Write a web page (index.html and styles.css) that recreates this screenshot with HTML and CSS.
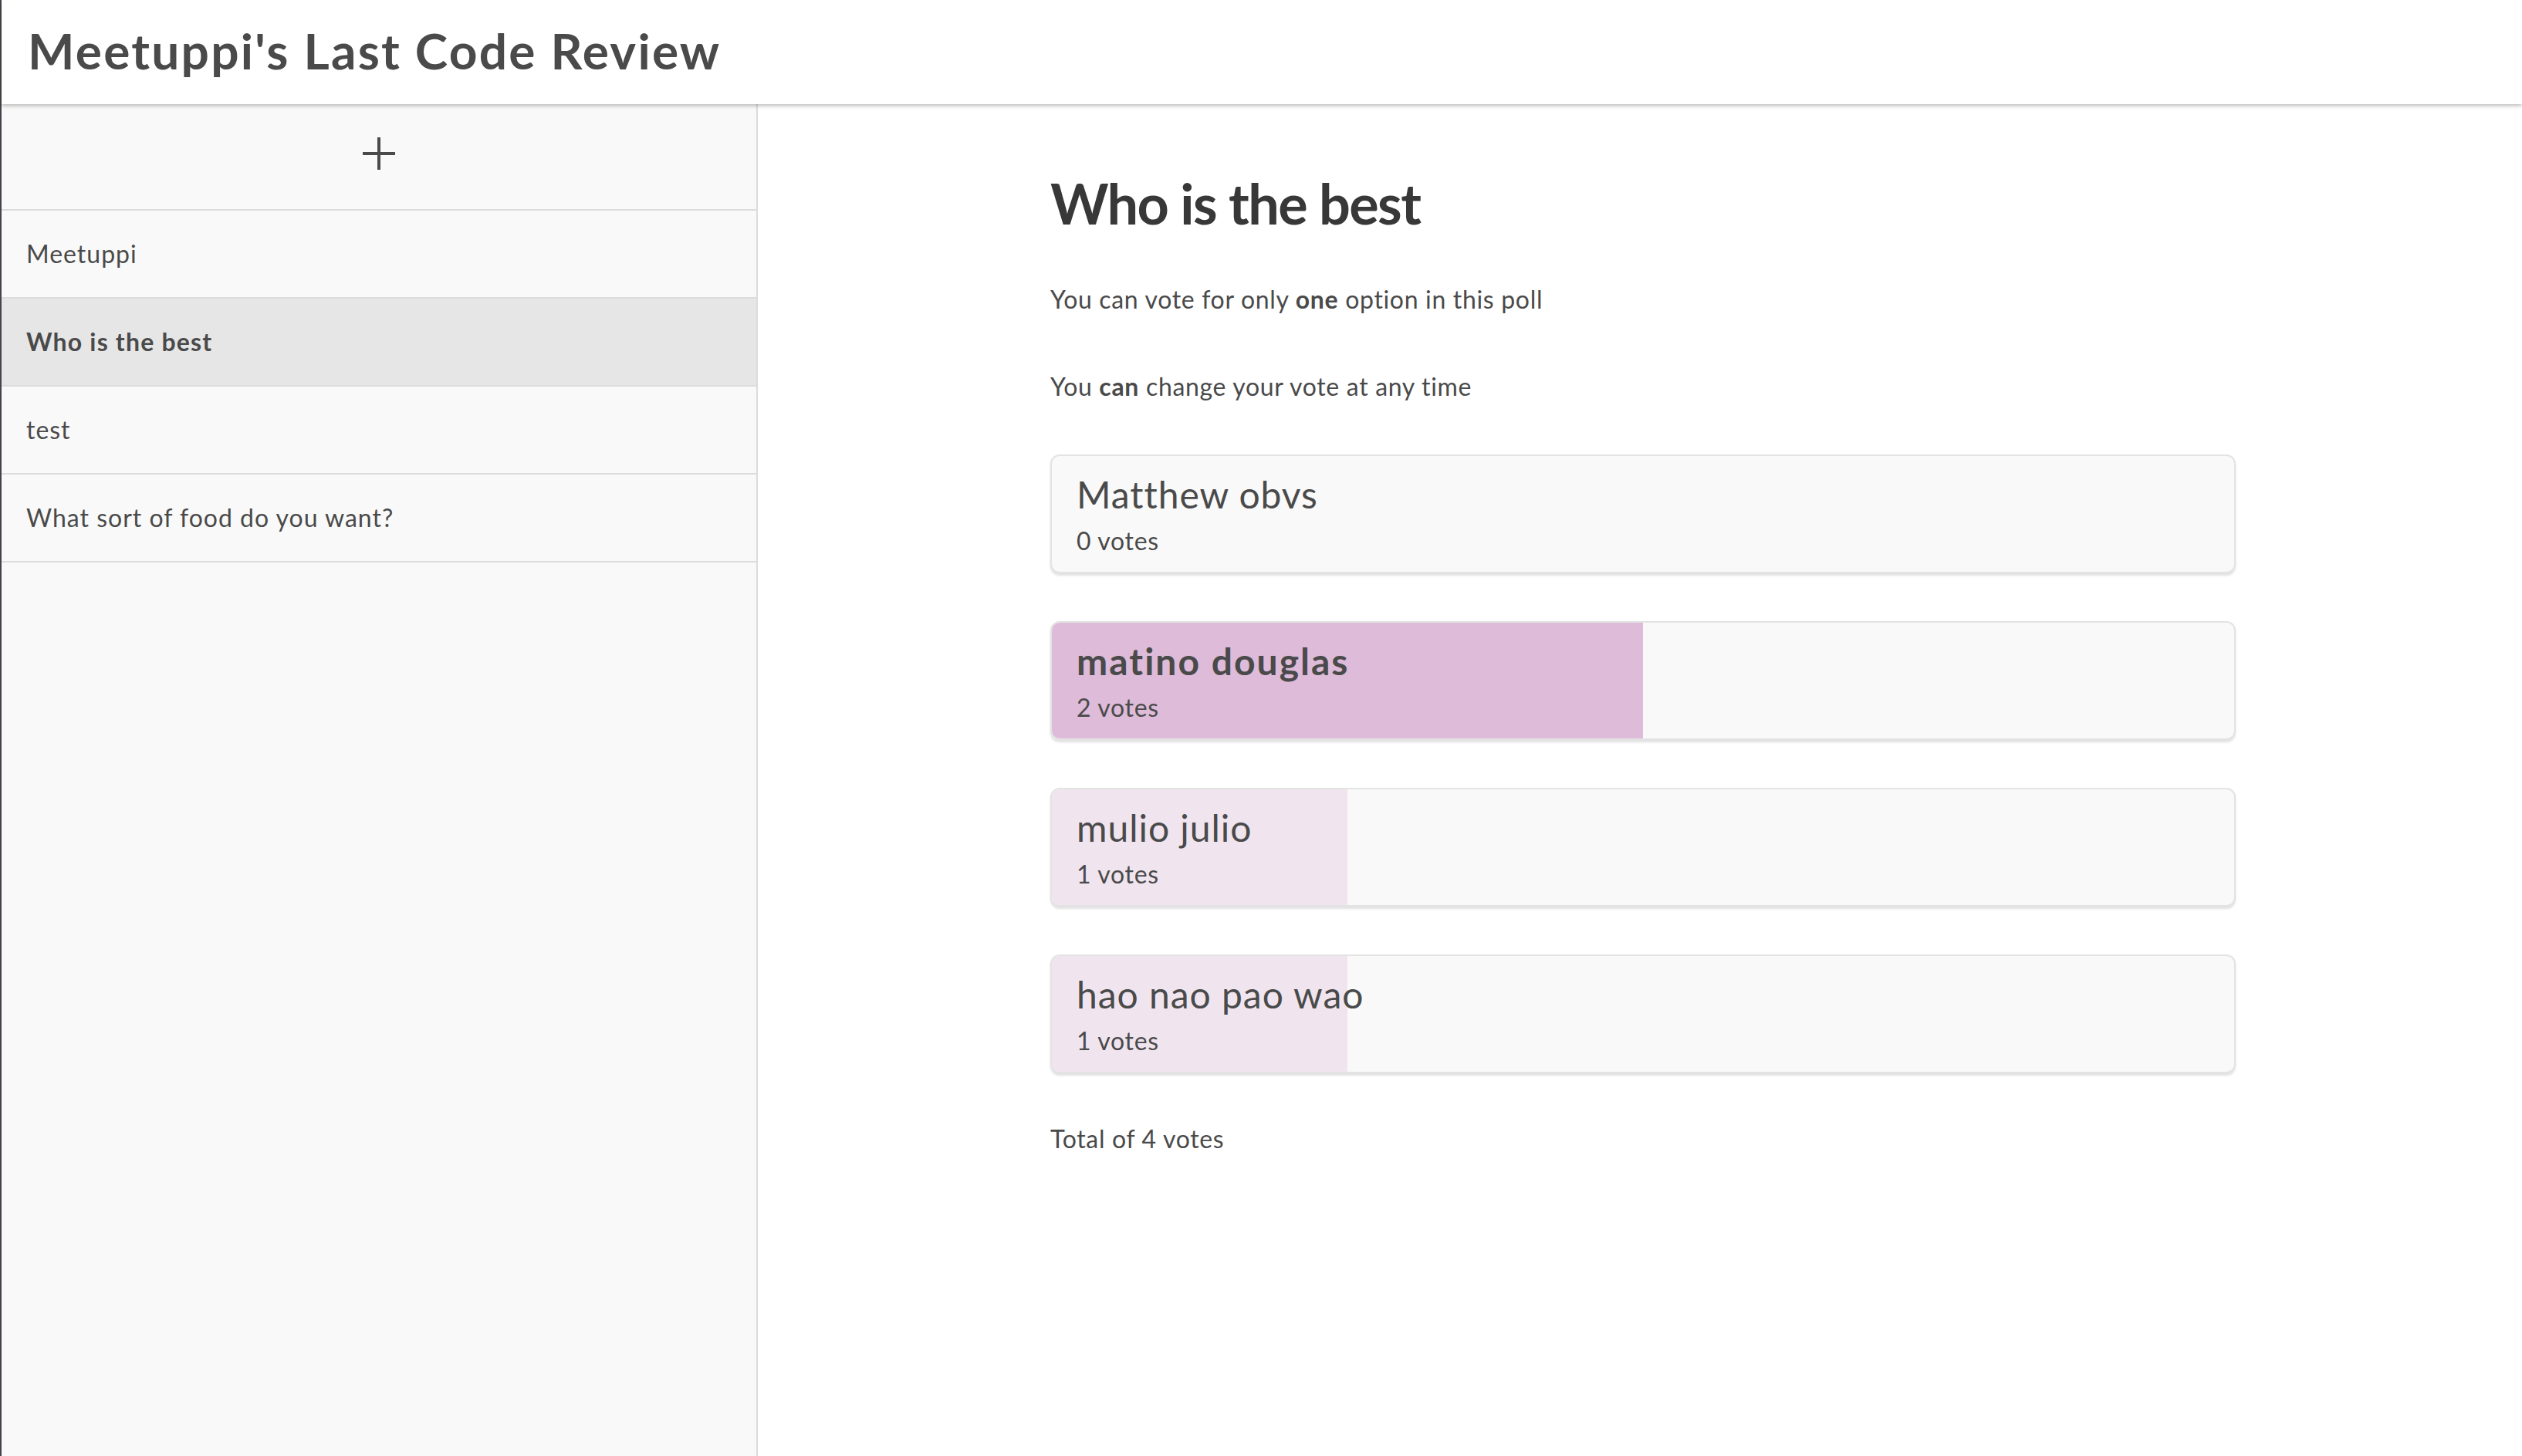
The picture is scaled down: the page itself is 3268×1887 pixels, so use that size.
FILE: index.html
```html
<!DOCTYPE html>
<html lang="en">
<head>
<meta charset="utf-8">
<title>Meetuppi's Last Code Review</title>
<link rel="stylesheet" href="styles.css">
</head>
<body>
<div class="app">
  <header class="topbar">
    <h1 class="app-title">Meetuppi's Last Code Review</h1>
  </header>
  <div class="layout">
    <aside class="sidebar">
      <button class="add-btn" type="button" aria-label="New poll">
        <svg width="46" height="46" viewBox="0 0 46 46"><path d="M23 2V44M2 23H44" stroke="#4a4a4a" stroke-width="4" fill="none"/></svg>
      </button>
      <ul class="poll-list">
        <li class="poll-item">Meetuppi</li>
        <li class="poll-item active">Who is the best</li>
        <li class="poll-item">test</li>
        <li class="poll-item">What sort of food do you want?</li>
      </ul>
    </aside>
    <main class="main">
      <section class="poll">
        <h2 class="poll-title">Who is the best</h2>
        <p class="rule rule-one">You can vote for only <b>one</b> option in this poll</p>
        <p class="rule rule-two">You <b>can</b> change your vote at any time</p>
        <div class="options">
          <div class="option">
            <div class="fill" style="width:0%"></div>
            <div class="option-body">
              <div class="option-name">Matthew obvs</div>
              <div class="option-votes">0 votes</div>
            </div>
          </div>
          <div class="option voted">
            <div class="fill fill-strong" style="width:50%"></div>
            <div class="option-body">
              <div class="option-name">matino douglas</div>
              <div class="option-votes">2 votes</div>
            </div>
          </div>
          <div class="option">
            <div class="fill" style="width:25%"></div>
            <div class="option-body">
              <div class="option-name">mulio julio</div>
              <div class="option-votes">1 votes</div>
            </div>
          </div>
          <div class="option">
            <div class="fill" style="width:25%"></div>
            <div class="option-body">
              <div class="option-name">hao nao pao wao</div>
              <div class="option-votes">1 votes</div>
            </div>
          </div>
        </div>
        <p class="total">Total of 4 votes</p>
      </section>
    </main>
  </div>
</div>
</body>
</html>
```
FILE: styles.css
```css
* { box-sizing: border-box; }
html, body { margin: 0; padding: 0; height: 100%; }
body {
  font-family: Lato, "Open Sans", "Noto Sans", sans-serif;
  color: #4a4a4a;
  background: #ffffff;
  letter-spacing: 0.042em;
}
.app {
  display: flex;
  flex-direction: column;
  height: 100vh;
  border-left: 2px solid #46444c;
}
.topbar {
  height: 135px;
  flex: 0 0 135px;
  background: #ffffff;
  padding: 27px 0 0 34px;
  box-shadow: 0 2px 5px rgba(0,0,0,0.28);
  position: relative;
  z-index: 2;
}
.app-title {
  margin: 0;
  font-size: 64px;
  line-height: 77px;
  font-weight: 700;
  letter-spacing: 0.035em;
  color: #4a4a4a;
}
.layout {
  flex: 1;
  display: flex;
  min-height: 0;
}
.sidebar {
  width: 980px;
  flex: 0 0 980px;
  background: #f9f9f9;
  border-right: 2px solid #dcdcdc;
  display: flex;
  flex-direction: column;
}
.add-btn {
  height: 138px;
  border: 0;
  border-bottom: 2px solid #dcdcdc;
  background: transparent;
  display: flex;
  align-items: center;
  justify-content: center;
  padding: 0 0 8px 0;
  cursor: pointer;
}
.poll-list {
  list-style: none;
  margin: 0;
  padding: 0;
}
.poll-item {
  height: 114px;
  line-height: 112px;
  padding-left: 32px;
  border-bottom: 2px solid #dcdcdc;
  font-size: 32px;
  letter-spacing: 0.031em;
  color: #4a4a4a;
}
.poll-item.active {
  background: #e6e6e6;
  font-weight: 700;
  letter-spacing: 0.037em;
}
.main {
  flex: 1;
  display: flex;
  justify-content: center;
  padding: 85px 0 0 8px;
}
.poll {
  width: 1536px;
}
.poll-title {
  margin: 0;
  font-size: 72px;
  line-height: 86px;
  font-weight: 700;
  letter-spacing: -0.022em;
  color: #383838;
}
.rule {
  margin: 0;
  font-size: 32px;
  line-height: 48px;
}
.rule b { font-weight: 700; }
.rule-one { margin-top: 58px; }
.rule-two { margin-top: 65px; }
.options {
  margin-top: 64px;
  display: flex;
  flex-direction: column;
  gap: 62px;
}
.option {
  position: relative;
  height: 154px;
  background: #f9f9f9;
  border: 2px solid #e3e3e3;
  border-radius: 12px;
  box-shadow: 0 3px 3px rgba(0,0,0,0.12);
  overflow: hidden;
}
.fill {
  position: absolute;
  left: 0;
  top: 0;
  bottom: 0;
  background: #f0e5ef;
}
.fill-strong { background: #ddbbd9; }
.option-body {
  position: relative;
  padding: 21px 32px 16px 32px;
}
.option-name {
  font-size: 48px;
  line-height: 58px;
  letter-spacing: 0.02em;
  color: #4a4a4a;
}
.voted .option-name { font-weight: 700; letter-spacing: 0.042em; }
.option-votes {
  margin-top: 7px;
  font-size: 32px;
  line-height: 48px;
}
.total {
  margin: 61px 0 0 0;
  font-size: 32px;
  line-height: 48px;
}
```
